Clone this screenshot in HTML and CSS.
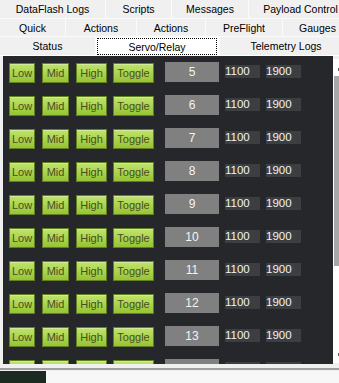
FILE: index.html
```html
<!DOCTYPE html>
<html lang="en">
<head>
  <meta charset="UTF-8">
  <title>Servo/Relay</title>
  <link rel="stylesheet" href="styles.css">
</head>
<body>
  <div class="tabs">
    <div class="tabrow">
      <div class="tab w106">DataFlash Logs</div>
      <div class="tab w66">Scripts</div>
      <div class="tab w77">Messages</div>
      <div class="tab w104">Payload Control</div>
    </div>
    <div class="tabrow middle">
      <div class="tab w66">Quick</div>
      <div class="tab w71">Actions</div>
      <div class="tab w69">Actions</div>
      <div class="tab w77">PreFlight</div>
      <div class="tab w70">Gauges</div>
    </div>
    <div class="tabrow front">
      <div class="tab w96">Status</div>
      <div class="tab w124 selected"><span class="focus">Servo/Relay</span></div>
      <div class="tab w133">Telemetry Logs</div>
    </div>
  </div>

  <div class="page">
    <div class="panel" id="servos"></div>
    <div class="scroll">
      <div class="arrow up"></div>
      <div class="thumb"></div>
      <div class="arrow down"></div>
    </div>
  </div>

  <div class="status">
    <div class="statusbar">
      <div class="hud"></div>
      <div class="rest"></div>
    </div>
  </div>

<script>
const panel = document.getElementById('servos');
for (let ch = 5; ch <= 14; ch++) {
  panel.innerHTML += `
    <div class="row">
      <div class="btn low">Low</div>
      <div class="btn mid">Mid</div>
      <div class="btn high">High</div>
      <div class="btn toggle">Toggle</div>
      <div class="chan">${ch}</div>
      <div class="pwm">1100</div>
      <div class="pwm">1900</div>
    </div>`;
}
</script>
</body>
</html>
```

FILE: styles.css
```css
body {
  margin: 0;
  width: 339px;
  height: 383px;
  overflow: hidden;
  background: #f0f0f0;
  font-family: 'Liberation Sans', Arial, sans-serif;
}

.tabs {
  width: 339px;
  overflow: hidden;
}

.tabrow {
  display: flex;
  height: 18px;
  border-bottom: 1px solid #fbfbfb;
  background: #f0f0f0;
}

.tabrow.middle {
  height: 17px;
}

.tabrow.front {
  height: 18px;
  border-bottom: none;
}

.tab {
  flex: none;
  box-sizing: border-box;
  border-right: 1px solid #fbfbfb;
  font-size: 10.5px;
  line-height: 19px;
  text-align: center;
  color: #000;
  white-space: nowrap;
}

.w66 { width: 66px; }
.w69 { width: 69px; }
.w70 { width: 70px; }
.w71 { width: 71px; }
.w77 { width: 77px; }
.w96 { width: 96px; }
.w104 { width: 104px; }
.w106 { width: 106px; }
.w124 { width: 124px; }
.w133 { width: 133px; }

.tab.selected {
  background: #fff;
  padding: 1px 2px 0 1px;
}

.focus {
  display: block;
  height: 17px;
  box-sizing: border-box;
  border: 1px dotted #000;
  line-height: 16px;
}

.page {
  display: flex;
  height: 309px;
  border-top: 1px solid #fff;
  padding: 0 0 0 3px;
  box-sizing: border-box;
}

.panel {
  flex: none;
  width: 330px;
  height: 308px;
  background: #26272a;
  overflow: hidden;
  padding: 6px 0 0 6px;
  box-sizing: border-box;
  display: flex;
  flex-direction: column;
  gap: 12px;
}

.row {
  display: flex;
  align-items: flex-start;
  gap: 6px;
  height: 21px;
  flex: none;
}

.btn {
  box-sizing: border-box;
  height: 20px;
  margin-top: 1px;
  border: 1px solid #62801f;
  background: linear-gradient(#c0e46c, #96c434);
  box-shadow: inset 0 1px rgba(255, 255, 255, 0.3);
  color: #4a4d22;
  font-size: 11px;
  line-height: 18px;
  text-align: center;
}

.low { width: 26px; }
.mid { width: 27px; margin-left: 1px; }
.high { width: 31px; margin-left: 1px; }
.toggle { width: 41px; }

.chan {
  width: 54px;
  height: 20px;
  margin-left: 5px;
  background: #808080;
  color: #f4f4f4;
  font-size: 12px;
  line-height: 20px;
  text-align: center;
}

.pwm {
  width: 35px;
  height: 13px;
  margin-top: 3px;
  background: #3c3e42;
  color: #eef4f4;
  font-size: 11.5px;
  line-height: 13px;
  box-sizing: border-box;
}

.scroll {
  flex: none;
  width: 17px;
  height: 304px;
  margin-top: 3px;
  background: #fff;
  position: relative;
}

.thumb {
  position: absolute;
  left: 1px;
  top: 17px;
  width: 15px;
  height: 190px;
  background: #a8a8a8;
}

.arrow {
  position: absolute;
  left: 5px;
  width: 6px;
  height: 3px;
  background: #606060;
}

.arrow.up { top: 9px; }
.arrow.down { top: 294px; }

.status {
  padding-top: 4px;
}

.statusbar {
  display: flex;
  height: 13px;
  border-top: 2px solid #a0a0a0;
}

.hud {
  width: 46px;
  margin-top: 1px;
  background: #1d2a21;
}

.rest {
  flex: 1;
  margin-top: 1px;
  background: #f7f7f7;
}
```
